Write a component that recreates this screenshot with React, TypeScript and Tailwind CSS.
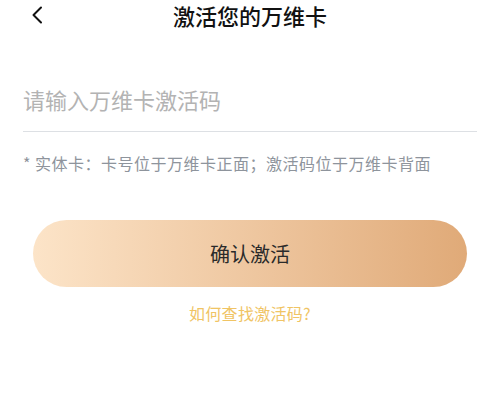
import React, { useState } from 'react';

const font = { fontFamily: '"Noto Sans CJK SC", "Noto Sans", sans-serif' };

const App: React.FC = () => {
  const [code, setCode] = useState('');

  return (
    <div className="w-[500px] h-[403px] bg-white overflow-hidden" style={font}>
      <div className="relative flex items-center justify-center h-[30px]">
        <button className="absolute left-[27px] top-[4px] w-[20px] h-[22px] flex items-center justify-center">
          <svg width="14" height="18" viewBox="0 0 14 18" fill="none">
            <path d="M11 1.5L3.5 9L11 16.5" stroke="#111" strokeWidth="2" strokeLinecap="round" strokeLinejoin="round" />
          </svg>
        </button>
        <h1 className="text-[22px] leading-[30px] font-medium text-[#111]">激活您的万维卡</h1>
      </div>

      <div className="px-[23px] pt-[47px]">
        <input
          value={code}
          onChange={(e) => setCode(e.target.value)}
          placeholder="请输入万维卡激活码"
          className="w-full h-[55px] pb-[11px] text-[22px] text-[#333] placeholder:text-[#b3b3b3] outline-none bg-transparent border-b border-[#dde0e4]"
          style={font}
        />
        <p className="mt-[20px] text-[16px] leading-[22px] tracking-[0.5px] text-[#8e949c]">* 实体卡：卡号位于万维卡正面；激活码位于万维卡背面</p>
      </div>

      <div className="px-[33px] pt-[46px]">
        <button className="w-full h-[67px] rounded-full bg-gradient-to-r from-[#fce4c8] to-[#e0aa78] text-[20px] text-[#2a2a2a]">
          确认激活
        </button>
      </div>

      <div className="flex justify-center pt-[15px]">
        <a className="text-[16px] leading-[22px] tracking-[0.3px] text-[#f0c464]">如何查找激活码?</a>
      </div>
    </div>
  );
};

export default App;
